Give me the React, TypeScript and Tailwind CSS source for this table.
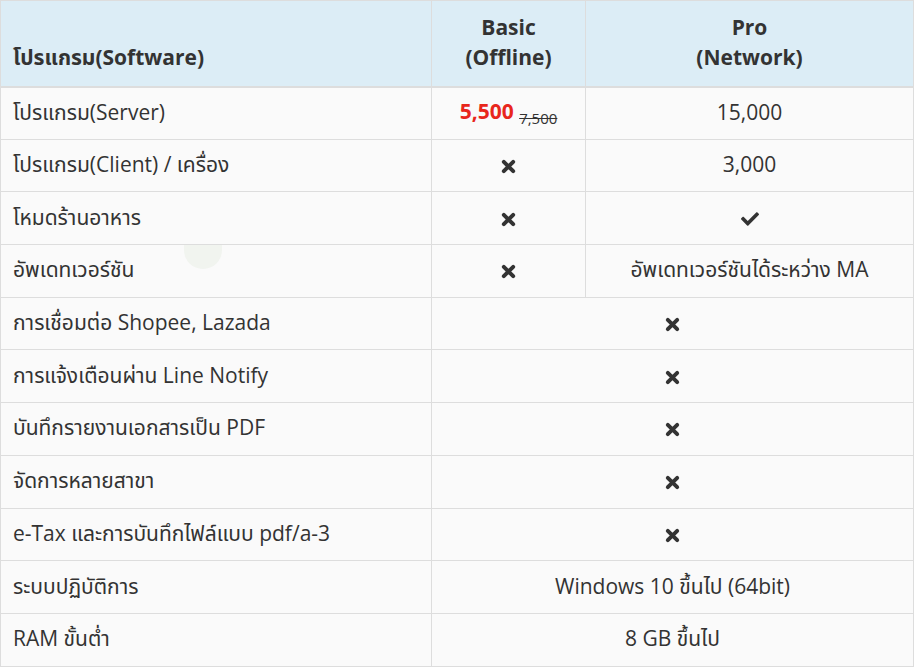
import { FaCheck } from "react-icons/fa";

type Row = {
  label: string;
  basic?: React.ReactNode;
  pro?: React.ReactNode;
  both?: React.ReactNode;
};

// heavy "times" mark like the old font-awesome glyph
const Cross = () => (
  <svg viewBox="0 0 16 16" className="inline-block w-[15px] h-[15px] align-[-2px]">
    <path d="M3 3 L13 13 M13 3 L3 13" stroke="#333" strokeWidth="4.2" strokeLinecap="round" />
  </svg>
);

const rows: Row[] = [
  {
    label: "โปรแกรม(Server)",
    basic: (
      <span>
        <span className="text-[#e8261c] font-bold">5,500</span>{" "}
        <span className="line-through text-[15px] relative top-[5px]">7,500</span>
      </span>
    ),
    pro: "15,000",
  },
  { label: "โปรแกรม(Client) / เครื่อง", basic: <Cross />, pro: "3,000" },
  {
    label: "โหมดร้านอาหาร",
    basic: <Cross />,
    pro: <FaCheck className="inline-block text-[#333] w-[18px] h-[18px]" />,
  },
  { label: "อัพเดทเวอร์ชัน", basic: <Cross />, pro: "อัพเดทเวอร์ชันได้ระหว่าง MA" },
  { label: "การเชื่อมต่อ Shopee, Lazada", both: <Cross /> },
  { label: "การแจ้งเตือนผ่าน Line Notify", both: <Cross /> },
  { label: "บันทึกรายงานเอกสารเป็น PDF", both: <Cross /> },
  { label: "จัดการหลายสาขา", both: <Cross /> },
  { label: "e-Tax และการบันทึกไฟล์แบบ pdf/a-3", both: <Cross /> },
  { label: "ระบบปฏิบัติการ", both: "Windows 10 ขึ้นไป (64bit)" },
  { label: "RAM ขั้นต่ำ", both: "8 GB ขึ้นไป" },
];

export default function App() {
  return (
    <div className="relative w-[914px] h-[670px] overflow-hidden bg-white font-['Open_Sans','Noto_Sans_Thai','Noto_Sans_Thai_UI','Noto_Sans',sans-serif] text-[#333] text-[21px]">
      <table className="w-[913px] border-collapse border border-[#ddd] table-fixed">
        <colgroup>
          <col className="w-[431px]" />
          <col className="w-[154px]" />
          <col className="w-[328px]" />
        </colgroup>
        <thead>
          <tr className="bg-[#dcedf6] h-[86px]">
            <th className="border border-[#ddd] border-b-2 text-left align-bottom px-3 pb-[14px] font-bold leading-[30px]">
              โปรแกรม(Software)
            </th>
            <th className="border border-[#ddd] border-b-2 text-center align-middle font-bold leading-[30px] pb-[2px]">
              Basic
              <br />
              (Offline)
            </th>
            <th className="border border-[#ddd] border-b-2 text-center align-middle font-bold leading-[30px] pb-[2px]">
              Pro
              <br />
              (Network)
            </th>
          </tr>
        </thead>
        <tbody>
          {rows.map((r, i) => (
            <tr key={i} className="bg-[#fafafa] h-[52.7px]">
              <td className="border border-[#ddd] px-3 align-middle leading-[26px] pb-[3px]">{r.label}</td>
              {r.both !== undefined ? (
                <td colSpan={2} className="border border-[#ddd] text-center align-middle leading-[26px] pb-[3px]">
                  {r.both}
                </td>
              ) : (
                <>
                  <td className="border border-[#ddd] text-center align-middle leading-[26px] pb-[3px]">{r.basic}</td>
                  <td className="border border-[#ddd] text-center align-middle leading-[26px] pb-[3px]">{r.pro}</td>
                </>
              )}
            </tr>
          ))}
        </tbody>
      </table>
      {/* faint ripple left over in the screenshot */}
      <div className="absolute left-[184px] top-[245px] w-[38px] h-[24px] rounded-b-full bg-[#f1f4ef]" />
    </div>
  );
}
